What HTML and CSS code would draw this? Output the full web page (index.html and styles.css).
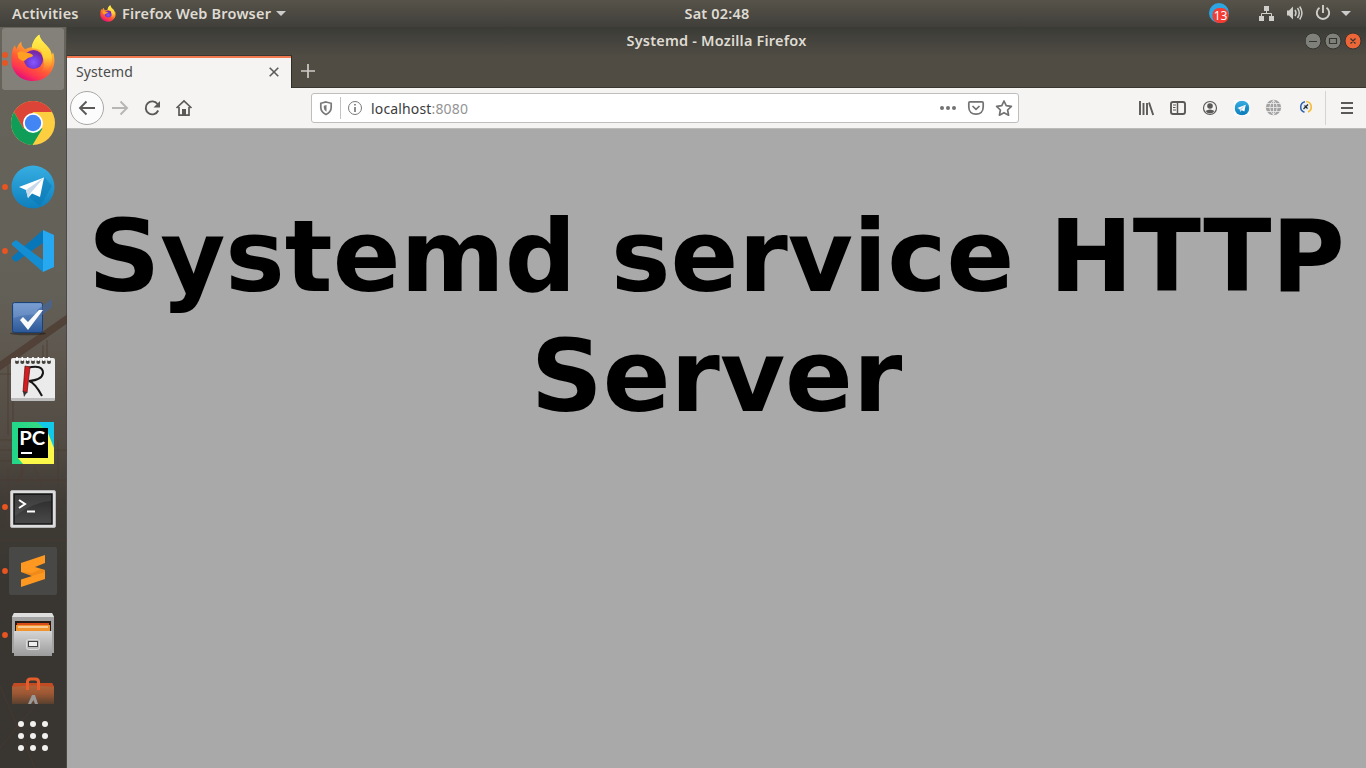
FILE: index.html
```html
<!DOCTYPE html>
<html lang="en">
<head>
<meta charset="utf-8">
<title>Systemd</title>
<link rel="stylesheet" href="styles.css">
</head>
<body>
<svg class="defs" width="0" height="0">
  <defs>
    <linearGradient id="flame" x1=".8" y1="0" x2=".3" y2="1"><stop offset="0" stop-color="#fff44f"/><stop offset=".38" stop-color="#ffa030"/><stop offset=".65" stop-color="#ff5b36"/><stop offset=".82" stop-color="#ff3750"/><stop offset="1" stop-color="#e00a80"/></linearGradient>
    <linearGradient id="crest" x1="0" y1="0" x2="0" y2="1"><stop offset="0" stop-color="#fff44f"/><stop offset=".6" stop-color="#ffcf36"/><stop offset="1" stop-color="#ff9a2b" stop-opacity="0"/></linearGradient>
    <radialGradient id="globe" cx=".5" cy=".65"><stop offset="0" stop-color="#8a58fa"/><stop offset=".5" stop-color="#7542e5"/><stop offset="1" stop-color="#7a2aa8"/></radialGradient>
    <linearGradient id="tele" x1="0" y1="0" x2="0" y2="1"><stop offset="0" stop-color="#37aee2"/><stop offset="1" stop-color="#0d7fbd"/></linearGradient>
    <linearGradient id="steel" x1="0" y1="0" x2="0" y2="1"><stop offset="0" stop-color="#d5d5d5"/><stop offset="1" stop-color="#9b9b9b"/></linearGradient>
    <linearGradient id="blue" x1="0" y1="0" x2="0" y2="1"><stop offset="0" stop-color="#7298ce"/><stop offset="1" stop-color="#2c5898"/></linearGradient>
    <linearGradient id="screen" x1="0" y1="0" x2="0" y2="1"><stop offset="0" stop-color="#282828"/><stop offset="1" stop-color="#4a4a4a"/></linearGradient>
    <linearGradient id="pc" x1="0" y1="0" x2="1" y2="0"><stop offset="0" stop-color="#21d789"/><stop offset="1" stop-color="#3fdc82"/></linearGradient>
    <linearGradient id="bag" x1="0" y1="0" x2="0" y2="1"><stop offset="0" stop-color="#b5653a"/><stop offset=".5" stop-color="#9c5834"/><stop offset="1" stop-color="#59402f"/></linearGradient>
    <symbol id="firefox" viewBox="0 0 46 48">
      <path d="M4.500 11 6 15C7 12 9 9 11 7.500C11 11 12 13 15 15C18 13.500 20 13 22 13C23 7 26 3 29.500 0C30 5 34 8 37.500 12C41 15 42 18 42 21L43.500 18C46 26 45 32 42 37C38 44 31 47.500 23 47.500C9 47.500 0 37 1 25C1.200 18 2 14 4.500 11Z" fill="url(#flame)"/>
      <circle cx="23.500" cy="25.500" r="9.800" fill="url(#globe)"/>
      <path d="M29.500 0C30 5 34 8 37.500 12C43 18 44 27 40 34C37 38 33 39 31 38C35 34 35 28 33 23L32 18C29 15 26 14 22 14C21 10 25 3 29.500 0Z" fill="url(#crest)"/>
      <path d="M7 19C10 16 13 17 16 19C19 18.500 23 20 23 22C21 24 18 23 16 25.500C14 28 11 27 8 24Z" fill="#ffa023"/>
    </symbol>
    <symbol id="telegram" viewBox="0 0 44 44">
      <circle cx="22" cy="22" r="21.500" fill="url(#tele)"/>
      <path d="m34 13 7 8-12 20-11-9Z" fill="#0874ae" opacity=".4"/>
      <path d="M8 22 33 12.500 29 32 21 28.500 17 33 15 25Z" fill="#fff"/><path d="m15 25 18-12.500-13 15-3 5.500Z" fill="#c8daea"/>
    </symbol>
  </defs>
</svg>
<div class="desktop">
  <header class="topbar">
    <span class="activities">Activities</span>
    <svg class="app-icon" width="16" height="17"><use href="#firefox"/></svg>
    <span class="app-name">Firefox Web Browser</span>
    <svg class="caret" width="10" height="5"><path d="M0 0h10L5 5z" fill="#ccc"/></svg>
    <span class="clock">Sat 02:48</span>
    <div class="tray">
      <svg width="158" height="27" viewBox="1208 0 158 27">
        <circle cx="1219" cy="13" r="10" fill="#2ca5e0"/><rect x="1212.500" y="8" width="16" height="15" rx="6.500" fill="#f23c34"/>
        <text x="1220.500" y="19.500" text-anchor="middle" class="badge">13</text>
        <path d="M1264 6h5v5h-5zM1259 16h5v5h-5zM1269 16h5v5h-5z" fill="#d0cec9"/><path d="M1266.500 11v2.500M1261.500 17v-3.500h10V17" fill="none" stroke="#d0cec9"/>
        <path d="M1287 10.500h2l4-4v13l-4-4h-2z" fill="#d0cec9"/>
        <path d="M1295 10q2 3 0 6M1297.500 8q3.500 5 0 10M1299.700 6.500q4.500 6.500 0 13" fill="none" stroke="#d0cec9" stroke-width="1.500"/>
        <path d="M1319.500 7.700a6.200 6.200 0 1 0 7 0M1323 5v8" fill="none" stroke="#d0cec9" stroke-width="1.900"/>
        <path d="M1341 11h10l-5 5z" fill="#ccc"/>
      </svg>
    </div>
  </header>
  <div class="workspace">
    <nav class="dock">
      <svg class="crane" width="67" height="741" viewBox="0 27 67 741">
        <path d="M0 362 67 315V323L0 370ZM8 365v70M13 365v70M43 345v14M47 340v20" fill="#4d3a30" stroke="#4d3a30" opacity=".75"/>
        <path d="M0 374h12M0 440h12M0 450h67M0 461h12M58 440v45" stroke="#4a3a2d" opacity=".6"/>
        <path d="M0 480h67M0 540h67M8 468v62M25 466l-10 20M34 466l8 20M0 686l35 82M35 705 0 748M22 455v22" stroke="#54392f" fill="none" opacity=".5"/>
      </svg>
      <div class="launcher active"><svg width="67" height="64"><g fill="#e95420"><circle cx="5" cy="28" r="2.900"/><circle cx="5" cy="36" r="2.900"/></g><use href="#firefox" x="10.500" y="7.500" width="45" height="47"/></svg></div>
      <div class="launcher"><svg width="67" height="64">
        <circle cx="33" cy="32" r="22" fill="#fdce40"/><path d="M14 21A22 22 0 0 1 52 21H33L23.500 37.500Z" fill="#db4437"/><path d="M14 21A22 22 0 0 0 32.500 54L42.500 37.500H23.500Z" fill="#109d58"/><circle cx="33" cy="32" r="10" fill="#fff"/><circle cx="33" cy="32" r="8.200" fill="#4285f4"/></svg></div>
      <div class="launcher"><svg width="67" height="64"><circle cx="5" cy="32" r="2.900" fill="#e95420"/><use href="#telegram" x="11" y="10" width="44" height="44"/></svg></div>
      <div class="launcher"><svg width="67" height="64"><circle cx="5" cy="32" r="2.900" fill="#e95420"/>
        <path d="m12 38 31-27v13L16 43l-4-3Z" fill="#0877b9"/><path d="m12 24 4-3 27 20v12L12 26Z" fill="#148ed3"/><path d="M43 11 54 16v32l-11 5Z" fill="#27a9f2"/></svg></div>
      <div class="launcher"><svg width="67" height="64">
        <ellipse cx="28" cy="50.500" rx="18" ry="1.700" opacity=".35"/><rect x="12.500" y="19.500" width="30" height="30" rx="2" fill="url(#blue)" stroke="#1c4175"/><path d="M13.500 35V21h28v11Q27 30 13.500 35" fill="#8bacda" opacity=".35"/>
        <path d="m37 27 15-11v8l-12 10Z" fill="#3f68a5" opacity=".6"/><path d="m20 37 3-3 5 5 11-12h4L28 47Z" fill="#fafafa"/></svg></div>
      <div class="launcher"><svg width="67" height="64">
        <rect x="11" y="11" width="44" height="43" rx="2" fill="#ebebeb"/><path d="M11 51h44v1q0 2-2 2H13q-2 0-2-2z" fill="#bdbdbd"/>
        <g fill="#45423d"><circle cx="17" cy="15" r="2"/><circle cx="22.300" cy="15" r="2"/><circle cx="27.700" cy="15" r="2"/><circle cx="33" cy="15" r="2"/><circle cx="38.300" cy="15" r="2"/><circle cx="43.700" cy="15" r="2"/><circle cx="49" cy="15" r="2"/></g>
        <path d="M17 10v4m5.300-4v4m5.400-4v4m5.300-4v4m5.300-4v4m5.400-4v4m5.300-4v4" stroke="#fff" stroke-width="1.600"/>
        <path d="M27 21Q43 17 43 26Q42 33 29 34Q35 36 42 49" fill="none" stroke="#161616" stroke-width="2"/><path d="m25 19 5 1-3 26-4-1Z" fill="#d51c20" stroke="#501010" stroke-width=".7"/><path d="m23 44 4 1-3 5Z" fill="#333"/></svg></div>
      <div class="launcher"><svg width="67" height="64">
        <rect x="12" y="11" width="42" height="42" fill="url(#pc)"/><path d="M37 11h17v31L44 17Z" fill="#12c8e8"/><path d="m46 17 8 20v16H23l-5-6h26Z" fill="#fcf84a"/><rect x="18" y="17" width="30" height="30"/><text x="19.300" y="33.500" class="pc" textLength="26" lengthAdjust="spacingAndGlyphs">PC</text><path d="M21 41h11v2H21z" fill="#fff"/></svg></div>
      <div class="launcher"><svg width="67" height="64"><circle cx="5" cy="32" r="2.900" fill="#e95420"/>
        <rect x="10.500" y="15.500" width="45" height="37" rx="1.500" fill="#ddd" stroke="#b5b5b5"/><rect x="14" y="19" width="38" height="30" fill="url(#screen)" stroke="#161616" stroke-width="1.500"/><path d="M15 20h36v6Q34 27 15 41Z" fill="#888" opacity=".2"/><path d="m19 25 6 4-6 4M27 36.500h8" fill="none" stroke="#fff" stroke-width="2"/></svg></div>
      <div class="launcher"><svg width="67" height="64"><circle cx="5" cy="32" r="2.900" fill="#e95420"/>
        <rect x="9" y="8" width="48" height="48" rx="2" fill="#484846"/><path d="M21 24 45 16V24L35 28 45 31V40L21 48V40.500L32 37 21 33Z" fill="#ff9820"/><path d="m22 33 10 4 13-4v-2l-4-1-9 4Z" fill="#e27e12" opacity=".5"/></svg></div>
      <div class="launcher"><svg width="67" height="64"><circle cx="5" cy="32" r="2.900" fill="#e95420"/>
        <path d="m14 10h38l2 4v36H12V14Z" fill="#a3a3a3"/><path d="m14 10h38l2 4H12Z" fill="#dedede"/><path d="M15 18h36v10H15z" fill="#241a16"/><path d="M17 20h32v7H17z" fill="#d94b18"/><path d="M16 22h34v6H16z" fill="#f1942d"/><path d="M18 24h30" stroke="#fff"/>
        <path d="M14 28h38v25H14Z" fill="url(#steel)"/><rect x="26.500" y="36.500" width="13" height="10" rx="2" fill="#bbb" stroke="#ddd"/><rect x="28.500" y="38.500" width="9" height="5" fill="#eee" stroke="#444"/></svg></div>
      <div class="launcher clipped"><svg width="67" height="64"><path d="m14 16h38l2 4v17H12V20Z" fill="url(#bag)"/><path d="M12 20q21-3 42 0l-2-4H14Z" fill="#c14b22"/><path d="M27.500 23v-8q0-3 3-3h5q3 0 3 3v8" fill="none" stroke="#e65d2b" stroke-width="3"/><path d="m28 37 4-9h3l3 9h-3l-1.500-4-2.500 4Z" fill="#999"/></svg></div>
      <div class="apps"><i></i><i></i><i></i><i></i><i></i><i></i><i></i><i></i><i></i></div>
    </nav>
    <main class="window">
      <div class="titlebar"><span>Systemd - Mozilla Firefox</span>
        <div class="controls"><svg width="60" height="27" viewBox="1306 27 60 27"><g stroke="#33332e"><circle cx="1313" cy="41" r="8" fill="#80807a"/><circle cx="1333" cy="41" r="8" fill="#80807a"/><circle cx="1353" cy="41" r="8" fill="#ed6637"/></g><path d="M1309 41.500h8M1329.500 38.500h7v5h-7zM1350.500 38.500l5 5m0-5-5 5" fill="none" stroke="#363631" stroke-width="1.200"/></svg></div>
      </div>
      <div class="tabs"><div class="tab"><span>Systemd</span><svg width="10" height="10"><path d="m.7.7 8.600 8.600m0-8.600L.7 9.300" stroke="#5c5b5a" stroke-width="1.600"/></svg></div>
        <svg class="plus" width="14" height="14"><path d="M7 0v14M0 7h14" stroke="#cfccc5" stroke-width="1.700"/></svg></div>
      <div class="toolbar">
        <svg class="navigation" width="140" height="40" viewBox="67 88 140 40" fill="none" stroke="#5a5958" stroke-width="1.900"><circle cx="87" cy="108" r="16.500" fill="#fcfcfc" stroke="#aaa8a6" stroke-width="1"/><path d="M95 108H80m6.500-6.500L80 108l6.500 6.500"/><path d="M112 108h15m-6.500-6.500 6.500 6.500-6.500 6.500" stroke="#b8b6b4"/><path d="M157.500 104a6.500 6.500 0 1 0 .7 6.500"/><path d="M160 101v6.500h-6.500z" fill="#5a5958" stroke="none"/><path d="m176.500 108 7.500-7 7.500 7M179 107v8.200h10V107" stroke-width="1.700"/><path d="M182 109h4v6h-4z" fill="#5a5958" stroke="none"/></svg>
        <div class="urlbar">
          <svg width="59" height="28" viewBox="312 94 59 28" fill="none" stroke="#7a7979" stroke-width="1.700"><path d="m326 102 5.200 1.300v4c0 3.500-2 5.700-5.200 7.200-3.200-1.500-5.200-3.700-5.200-7.200v-4Z"/><path d="M326.500 105v6.700q-2.700-1.500-2.700-4v-2z" fill="#7a7979" stroke="none"/><path d="M340.500 97v22" stroke="#c5c3c2" stroke-width="1"/><circle cx="355" cy="108" r="6.500" stroke-width="1"/><path d="M355 107v5M355 104v1.500"/></svg>
          <span class="address">localhost<span class="port">:8080</span></span>
          <svg class="page-actions" width="84" height="28" viewBox="934 94 84 28" fill="none" stroke="#737272" stroke-width="1.700"><g fill="#737272" stroke="none"><circle cx="942" cy="108" r="2"/><circle cx="948" cy="108" r="2"/><circle cx="954" cy="108" r="2"/></g><path d="M970 101.800h12q1.200 0 1.200 1.200v4c0 4.500-3 7.200-7.200 7.200s-7.200-2.700-7.200-7.200v-4q0-1.200 1.200-1.200ZM972.500 106l3.500 3.300 3.500-3.300"/><path d="m1004 101 2.200 4.700 5.200.7-3.800 3.600 1 5.200-4.600-2.500-4.600 2.500 1-5.200-3.800-3.600 5.200-.7Z" stroke-linejoin="round"/></svg>
        </div>
        <svg class="extensions" width="240" height="40" viewBox="1126 88 240 40" fill="none" stroke="#5a5958" stroke-width="1.900"><path d="M1140 101v14M1143.500 103v12M1147 103v12M1149 102.500l4.200 12.500" stroke-width="1.900"/><rect x="1171" y="102" width="14" height="12" rx="2"/><path d="M1177.500 102v12" stroke-width="1.500"/><path d="M1173 105h3M1173 107.500h2.500M1173 110h3" stroke-width="1"/><circle cx="1210" cy="108" r="6.500" stroke-width="1.200"/><circle cx="1210" cy="106" r="2.800" fill="#5a5958" stroke="none"/><path d="M1205.500 111q4.500-3 9 0-2 2.500-4.500 2.500t-4.500-2.500Z" fill="#5a5958" stroke="none"/>
          <path d="M1234 100h16v16h-16z" fill="#fafafa" stroke="none"/><use href="#telegram" x="1234.500" y="100.500" width="15" height="15" stroke="none"/>
          <circle cx="1273.500" cy="107.500" r="7.700" fill="#a3a3a3" stroke="none"/><path d="M1266 107.500h15M1273.500 100v15M1267 103.500h13M1267 111.500h13M1273.500 100q-7.500 7.500 0 15M1273.500 100q7.500 7.500 0 15" stroke="#efefef" stroke-width=".8"/>
          <path d="M1305 101.700a5.500 5.500 0 0 0-.5 10.600" stroke="#3465b0" stroke-width="1.600"/><path d="M1306 101.500a5.500 5.500 0 0 1 2 10.500" stroke="#f5bd3e" stroke-width="1.700"/><circle cx="1306" cy="107" r="3.400" fill="#dce9f6" stroke="none"/><path d="m1303.500 109 4.500-4.500m-3.500 1 3 3" stroke="#222" stroke-width="1.100"/>
          <path d="M1325.500 91v34" stroke="#d6d4d2" stroke-width="1"/><path d="M1341 103h12M1341 108h12M1341 113h12"/></svg>
      </div>
      <section class="page"><h1>Systemd service HTTP Server</h1></section>
    </main>
  </div>
</div>
</body>
</html>
```
FILE: styles.css
```css
* { box-sizing: border-box; }
body { margin: 0; overflow: hidden; font-family: "Noto Sans", sans-serif; }
svg { display: block; flex: none; }
.defs { position: absolute; }
.desktop { width: 1366px; height: 768px; display: flex; flex-direction: column; }
.topbar { height: 27px; flex: none; display: flex; align-items: center; position: relative; background: linear-gradient(#57534a, #403f3a); color: #dfdbd2; font-size: 14.5px; letter-spacing: .2px; font-weight: 600; line-height: 26px; white-space: nowrap; }
.topbar > span { height: 27px; }
.activities { width: 68px; margin-left: 12px; }
.app-icon { margin-left: 20px; }
.app-name { width: 150px; margin-left: 6px; }
.caret { margin-left: 4px; }
.clock { position: absolute; left: 68px; right: 0; text-align: center; }
.tray { margin-left: auto; }
.badge { font: 12px "Noto Sans", sans-serif; letter-spacing: 0; fill: #fff; }
.workspace { flex: 1; display: flex; min-height: 0; }
.dock { width: 67px; flex: none; position: relative; background: linear-gradient(#67645c, #636058 36%, #5c554c 46%, #514b43 56%, #403b35 64%, #393631 75%, #393631); border-right: 1px solid #4b4943; }
.crane { position: absolute; inset: 0 auto auto 0; }
.launcher { height: 64px; width: 67px; position: relative; }
.active::before { content: ""; position: absolute; left: 2px; top: 1px; width: 62px; height: 62px; border-radius: 3px; background: rgba(255,255,255,.19); }
.launcher svg { position: relative; }
.clipped { height: 37px; overflow: hidden; }
.pc { font: bold 18px Lato, sans-serif; fill: #fff; }
.apps { position: relative; width: 66px; padding: 17px 18px; display: grid; grid-template-columns: repeat(3, 6px); gap: 6px; }
.apps i { width: 6px; height: 6px; border-radius: 50%; background: #f2f1ef; }
.window { flex: 1; min-width: 0; display: flex; flex-direction: column; }
.titlebar { height: 28px; display: flex; justify-content: center; position: relative; background: linear-gradient(#3b3b36, #4e4b43); color: #dfdbd2; font-size: 14.5px; letter-spacing: .2px; font-weight: 600; line-height: 27px; }
.controls { position: absolute; right: 0; top: 0; }
.tabs { height: 33px; display: flex; align-items: center; background: #504c44; border-bottom: 1px solid #383732; }
.tab { width: 225px; height: 33px; align-self: flex-start; padding: 0 12px 0 9px; display: flex; align-items: center; justify-content: space-between; border-top: 1px solid #383732; border-right: 1px solid #302e29; background: linear-gradient(#f27950 2px, #f5f4f2 2px); color: #4c4c4c; font-size: 14px; letter-spacing: .1px; }
.tab span { padding-bottom: 1px; }
.plus { margin-left: 9px; }
.toolbar { height: 41px; display: flex; background: #f5f4f2; border-bottom: 1px solid #bdbbb8; }
.urlbar { margin: 5px 0 0 104px; width: 708px; height: 30px; display: flex; align-items: center; border: 1px solid #c0bebc; border-radius: 3px; background: #fff; font-size: 14px; letter-spacing: .15px; color: #3c3c3c; }
.port { color: #949494; }
.page-actions { margin-left: auto; }
.extensions { margin-left: auto; }
.page { flex: 1; background: #a9a9a9; }
.page h1 { margin: 67.5px 8px 0; text-align: center; font: bold 100px/120px "DejaVu Sans", sans-serif; color: #000; }
```
